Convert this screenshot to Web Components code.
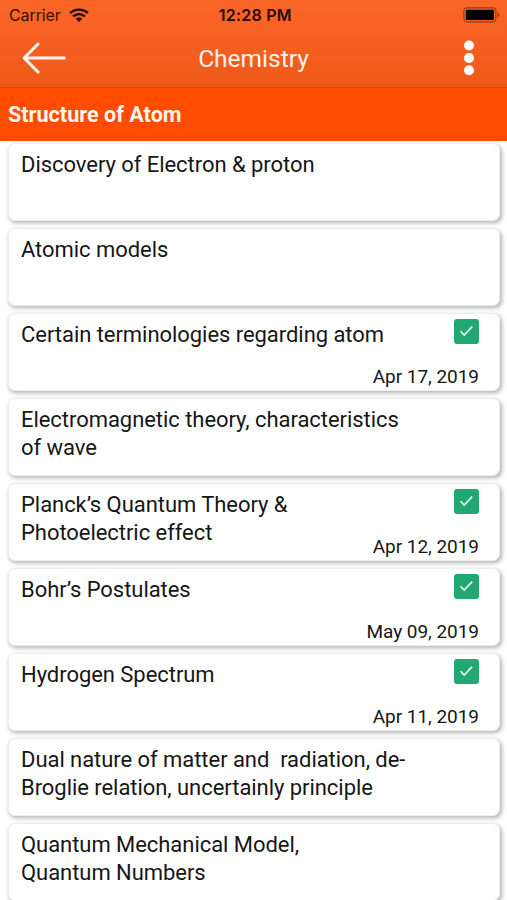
<!DOCTYPE html>
<html lang="en">
<head>
<meta charset="utf-8">
<title>Chemistry</title>
<style>
html,body{margin:0;background:#fff;}
body{width:507px;height:900px;overflow:hidden;font-family:Roboto,sans-serif;color:#161616;}
</style>
</head>
<body>
<chem-app></chem-app>
<script>
const define=(name,html)=>customElements.define(name,class extends HTMLElement{
  constructor(){super();this.attachShadow({mode:'open'}).innerHTML=html;}
});

define('status-bar',`<style>
:host{display:grid;grid-template-columns:1fr auto 1fr;align-items:center;height:30px;padding:0 7px 0 9px;box-sizing:border-box;font:400 16px/30px Inter,sans-serif;color:#3a1000}
.left{display:flex;align-items:center;gap:8px}
.carrier{letter-spacing:-.1px}
.time{font-weight:600;color:#260a00;letter-spacing:.25px;transform:translateX(.8px)}
.battery{justify-self:end}
svg{display:block}
</style>
<div class="left"><span class="carrier">Carrier</span>
<svg width="20" height="15" viewBox="0 0 20 15" fill="none" stroke="#1c0500" stroke-width="2.4"><path d="M1.1 5.2C6 .4 14 .4 18.9 5.2M4.2 8.4c3.2-3.1 8.4-3.1 11.6 0"/><path d="M10 14 6.7 10.8c1.8-1.7 4.8-1.7 6.6 0z" fill="#1c0500" stroke="none"/></svg></div>
<span class="time">12:28 PM</span>
<svg class="battery" width="37" height="16" viewBox="0 0 37 16"><rect x=".9" y=".9" width="32" height="14" rx="3.4" fill="none" stroke="#9a3610" stroke-width="1.1"/><rect x="2.8" y="2.7" width="28.2" height="10.4" rx="1.4"/><path d="M34.5 5.5c2.4.8 2.4 4.2 0 5z" fill="#9a3610"/></svg>`);

define('nav-bar',`<style>
:host{display:grid;grid-template-columns:1fr auto 1fr;align-items:center;height:57px;padding:0 32.5px 2px 21.5px;box-sizing:border-box;color:#fff4ee}
.title{font-size:24.5px;line-height:55px;transform:translate(5.5px,1px)}
.more{justify-self:end}
svg{display:block}
</style>
<svg width="45" height="32" viewBox="0 0 45 32" fill="none" stroke="#fff6f0" stroke-width="3" stroke-linecap="round" stroke-linejoin="round"><path d="M42.5 16H2.5M16 2 2.2 16 16 30"/></svg>
<span class="title"><slot></slot></span>
<svg class="more" width="12" height="36" viewBox="0 0 12 36" fill="#fff"><circle cx="6" cy="5.5" r="5"/><circle cx="6" cy="18" r="5"/><circle cx="6" cy="30.3" r="5"/></svg>`);

define('section-title',`<style>
:host{display:block;height:54px;box-sizing:border-box;border-top:1px solid #dd4707;background:#ff4c00;padding-left:8px;color:#fff5ef;font-weight:700;font-size:21.6px;line-height:53px}
</style><slot></slot>`);

define('check-badge',`<style>
:host{display:block;width:25px;height:25px;border-radius:3px;background:#22a872}
svg{display:block}
</style><svg width="25" height="25" viewBox="0 0 25 25" fill="none" stroke="#e8fff5" stroke-width="1.6"><path d="m6.5 12.3 3.7 3.7 8-8.4"/></svg>`);

customElements.define('topic-card',class extends HTMLElement{
  constructor(){
    super();
    const date=this.getAttribute('date');
    this.attachShadow({mode:'open'}).innerHTML=`<style>
:host{display:flex;justify-content:space-between;height:78px;box-sizing:border-box;border:1px solid #ededed;border-radius:7px;background:#fff;box-shadow:1.5px 2px 4px rgba(0,0,0,.3);padding:5px 20px 0 12px}
.name{font-size:22px;line-height:28.4px;letter-spacing:-.05px;white-space:pre;padding-top:2px}
.meta{display:flex;flex-direction:column;align-items:flex-end;justify-content:space-between;height:70px}
.date{font-size:19px;line-height:24px;letter-spacing:-.04px;white-space:nowrap;margin-left:-60px}
</style><span class="name"><slot></slot></span>${date?`<div class="meta"><check-badge></check-badge><span class="date">${date}</span></div>`:''}`;
  }
});

define('chem-app',`<style>
:host{display:block}
header{background:linear-gradient(#fa6628,#ef5a1b)}
main{display:flex;flex-direction:column;gap:7px;padding:2px 7px 0 8px}
</style>
<header><status-bar></status-bar><nav-bar>Chemistry</nav-bar></header>
<section-title>Structure of Atom</section-title>
<main>
<topic-card>Discovery of Electron &amp; proton</topic-card>
<topic-card>Atomic models</topic-card>
<topic-card date="Apr 17, 2019">Certain terminologies regarding atom</topic-card>
<topic-card>Electromagnetic theory, characteristics
of wave</topic-card>
<topic-card date="Apr 12, 2019">Planck’s Quantum Theory &amp;
Photoelectric effect</topic-card>
<topic-card date="May 09, 2019">Bohr’s Postulates</topic-card>
<topic-card date="Apr 11, 2019">Hydrogen Spectrum</topic-card>
<topic-card>Dual nature of matter and  radiation, de-
Broglie relation, uncertainly principle</topic-card>
<topic-card>Quantum Mechanical Model,
Quantum Numbers</topic-card>
</main>`);
</script>
</body>
</html>
